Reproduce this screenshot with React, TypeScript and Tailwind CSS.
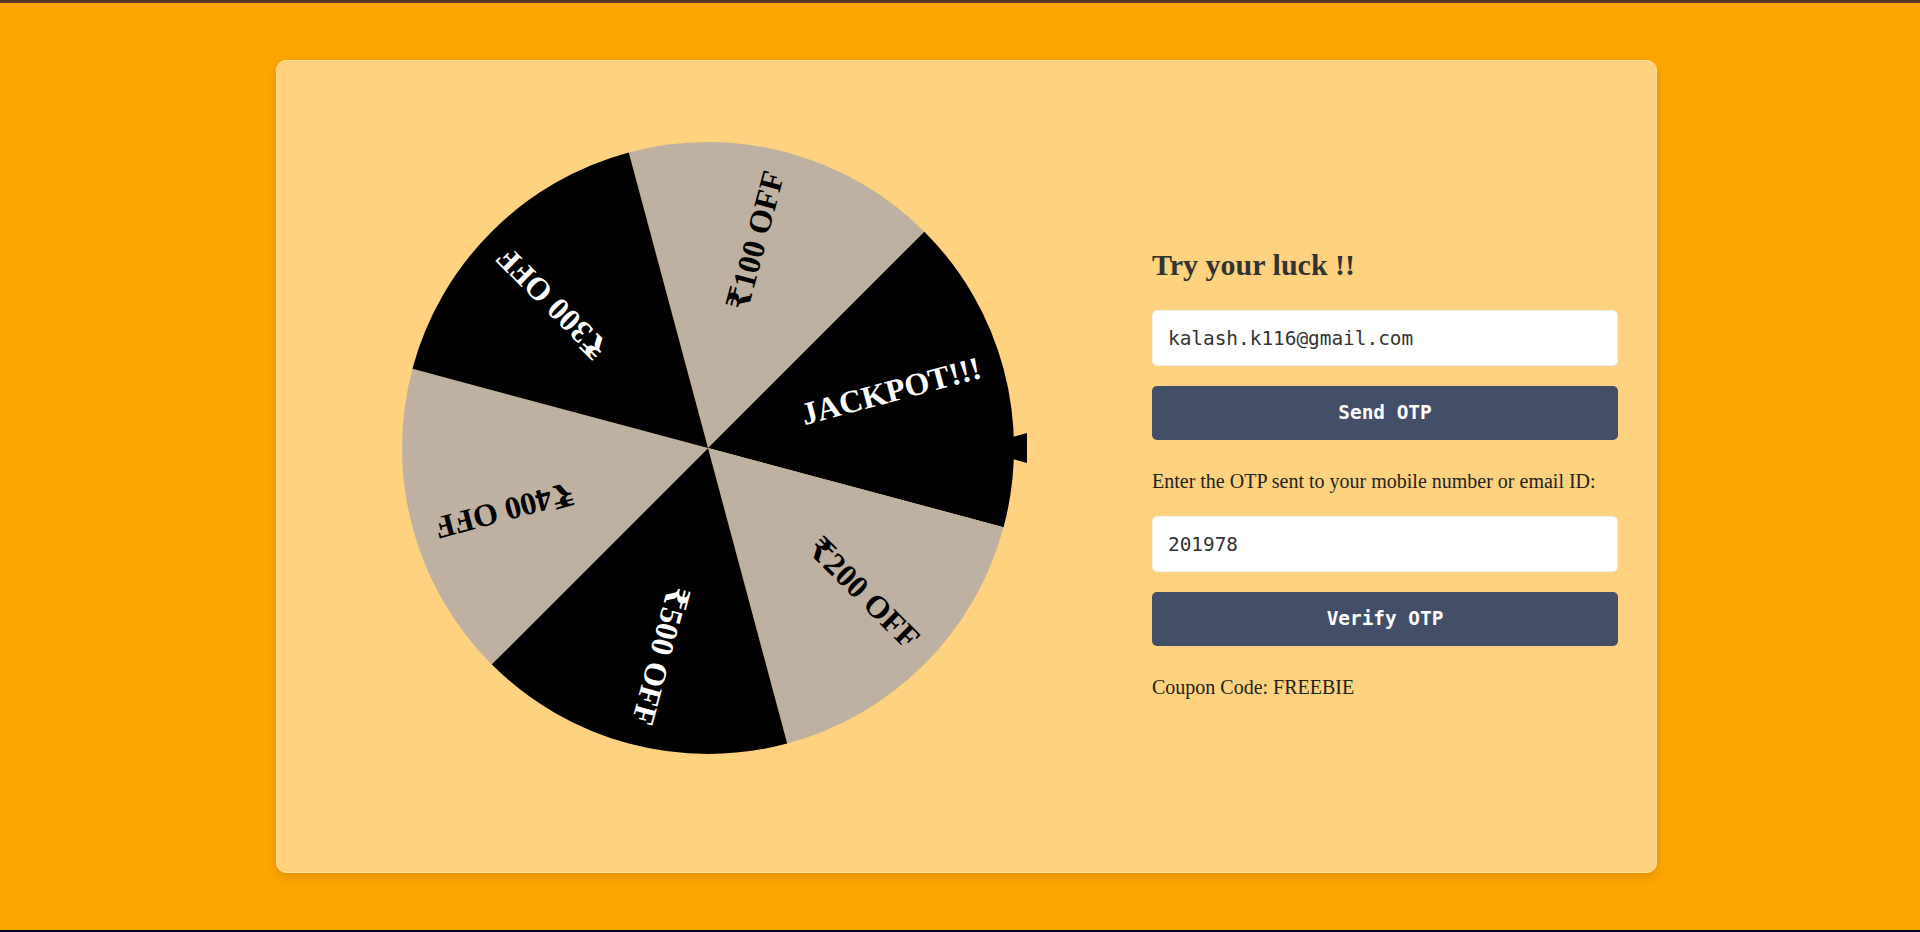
const R = 306;
const C = 306;

const slices = [
  { label: "₹100 OFF", fill: "#bfb1a2", ink: "#000" },
  { label: "JACKPOT!!!", fill: "#000", ink: "#fff" },
  { label: "₹200 OFF", fill: "#bfb1a2", ink: "#000" },
  { label: "₹500 OFF", fill: "#000", ink: "#fff" },
  { label: "₹400 OFF", fill: "#bfb1a2", ink: "#000" },
  { label: "₹300 OFF", fill: "#000", ink: "#fff" },
];

// angle measured clockwise from 12 o'clock
function pt(deg: number) {
  const a = (deg * Math.PI) / 180;
  return `${(C + R * Math.sin(a)).toFixed(2)} ${(C - R * Math.cos(a)).toFixed(2)}`;
}

function Wheel() {
  return (
    <svg width="626" height="612" viewBox="0 0 626 612" className="block shrink-0">
      {slices.map((s, i) => {
        const start = -15 + i * 60;
        const end = start + 60;
        const mid = start + 30;
        return (
          <g key={i}>
            <path d={`M ${C} ${C} L ${pt(start)} A ${R} ${R} 0 0 1 ${pt(end)} Z`} fill={s.fill} />
            <g transform={`translate(${C} ${C}) rotate(${mid - 90})`}>
              <text
                x="284"
                y="-8"
                textAnchor="end"
                dominantBaseline="central"
                fill={s.ink}
                fontSize="32"
                fontWeight="bold"
                fontFamily="'Liberation Serif', 'DejaVu Serif', serif"
              >
                {s.label}
              </text>
            </g>
          </g>
        );
      })}
      {/* pointer */}
      <polygon points="625,291 625,321 569,306" fill="#000" />
    </svg>
  );
}

export default function App() {
  return (
    <div className="h-[932px] w-full overflow-hidden bg-[#ffa500] border-t-[3px] border-t-[#5b3a2e] border-b-2 border-b-black">
      <div className="mt-[57px] ml-[276px] w-[1381px] h-[813px] flex items-start rounded-[10px] bg-[#ffd280] border border-[#ffdfa0] shadow-[0_4px_10px_rgba(0,0,0,0.12)]">
        <div className="pl-[125px] pt-[81px]">
          <Wheel />
        </div>

        <div className="ml-[124px] mt-[189px] w-[466px] flex flex-col font-['Liberation_Serif',serif]">
          <h2 className="text-[30px] leading-none font-bold text-[#333]">Try your luck !!</h2>

          <input
            readOnly
            value="kalash.k116@gmail.com"
            className="mt-[30px] h-[56px] w-full rounded-[5px] border border-[#eee] bg-white pl-[15px] font-['DejaVu_Sans_Mono',monospace] text-[19.4px] text-[#333] outline-none"
          />
          <button className="mt-[20px] h-[54px] w-full rounded-[5px] bg-[#434f68] font-['DejaVu_Sans_Mono',monospace] text-[19.4px] font-bold text-white">
            Send OTP
          </button>

          <p className="mt-[31px] text-[20px] leading-none text-[#222]">
            Enter the OTP sent to your mobile number or email ID:
          </p>

          <input
            readOnly
            value="201978"
            className="mt-[25px] h-[56px] w-full rounded-[5px] border border-[#eee] bg-white pl-[15px] font-['DejaVu_Sans_Mono',monospace] text-[19.4px] text-[#333] outline-none"
          />
          <button className="mt-[20px] h-[54px] w-full rounded-[5px] bg-[#434f68] font-['DejaVu_Sans_Mono',monospace] text-[19.4px] font-bold text-white">
            Verify OTP
          </button>

          <p className="mt-[31px] text-[20px] leading-none text-[#222]">Coupon Code: FREEBIE</p>
        </div>
      </div>
    </div>
  );
}
